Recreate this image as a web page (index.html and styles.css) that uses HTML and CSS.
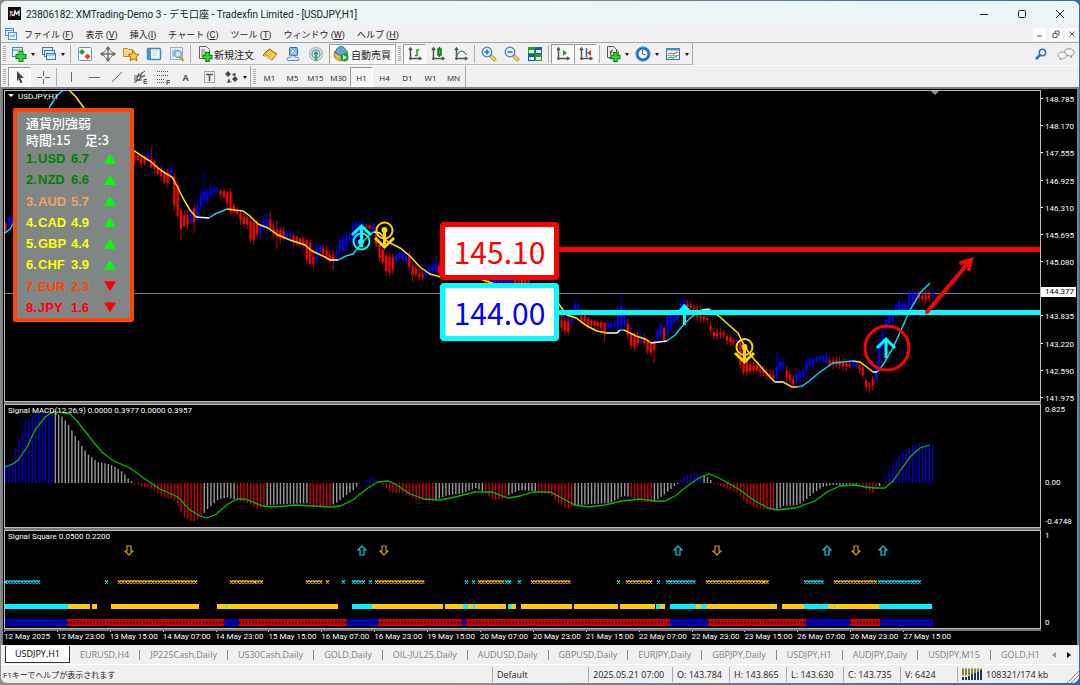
FILE: index.html
```html
<!DOCTYPE html>
<html lang="ja">
<head>
  <meta charset="UTF-8">
  <meta name="viewport" content="width=device-width, initial-scale=1.0">
  <title>XMTrading-Demo 3 - USDJPY,H1</title>
  <link rel="stylesheet" href="styles.css">
</head>
<body>
  <div class="window">
    <header class="titlebar">
      <svg class="app-logo" viewBox="0 0 13 13"><rect width="13" height="13" fill="#0b0b0b"/><path d="M2 4l3 5M5 4L2 9M6 9l1-5 1.500 3L11 4v5" stroke="#eee" stroke-width="1.300" fill="none"/><path d="M2 10l3-6" stroke="#e02020" stroke-width="1"/></svg>
      <h1>23806182: XMTrading-Demo 3 - デモ口座 - Tradexfin Limited - [USDJPY,H1]</h1>
      <div class="window-buttons">
        <button aria-label="最小化"><svg viewBox="0 0 10 10"><path d="M1 5.500h8"/></svg></button>
        <button aria-label="最大化"><svg viewBox="0 0 10 10"><rect x="1.500" y="1.500" width="7" height="7" rx="1"/></svg></button>
        <button aria-label="閉じる"><svg viewBox="0 0 10 10"><path d="M1 1l8 8M9 1L1 9"/></svg></button>
      </div>
    </header>

    <nav class="menubar">
      <svg class="menu-logo" viewBox="0 0 12 12" fill="#e8f3ff" stroke="#4b8fdc"><rect x=".5" y=".5" width="8" height="7"/><path d="M.5 2.500h8"/><rect x="3.500" y="4.500" width="8" height="7"/><path d="M5 9l1.500-2L8 9l2-3" fill="none"/></svg>
      <button>ファイル (<u>F</u>)</button>
      <button>表示 (<u>V</u>)</button>
      <button>挿入(<u>I</u>)</button>
      <button>チャート (<u>C</u>)</button>
      <button>ツール (<u>T</u>)</button>
      <button>ウィンドウ (<u>W</u>)</button>
      <button>ヘルプ (<u>H</u>)</button>
      <div class="child-buttons">
        <button aria-label="チャートを最小化"><svg viewBox="0 0 8 8"><path d="M1 6h5"/></svg></button>
        <button aria-label="元に戻す"><svg viewBox="0 0 8 8"><path d="M3 3V1h4v4H6M1 3.500h4v4H1z"/></svg></button>
        <button aria-label="チャートを閉じる"><svg viewBox="0 0 8 8"><path d="M1.500 1.500l5 5M6.500 1.500l-5 5"/></svg></button>
      </div>
    </nav>

    <div class="toolbar">
      <div class="group">
        <i class="grip"></i>
        <button class="tool drop" aria-label="新規チャート"><svg viewBox="0 0 16 16"><rect x="1.500" y="1.500" width="10" height="9" fill="#dff0fc" stroke="#4a86b4"/><path d="M2 4h9" stroke="#4a86b4"/><path d="M10 5v11M4.500 10.500h11" stroke="#087a10" stroke-width="5"/><path d="M10 6v9M5.500 10.500h9" stroke="#2fd63a" stroke-width="3"/></svg></button>
        <button class="tool drop" aria-label="チャートの組表示"><svg viewBox="0 0 16 16" fill="#d9edfb" stroke="#3f78aa"><rect x="1.500" y="1.500" width="10" height="7"/><rect x="3.500" y="4.500" width="10" height="6"/><rect x="5.500" y="7.500" width="9" height="6"/><path d="M6 9h8" stroke="#69a7d8"/></svg></button>
        <i class="sep"></i>
        <button class="tool" aria-label="気配値表示"><svg viewBox="0 0 16 16"><rect x="1.500" y="1.500" width="13" height="13" rx="1" fill="#fafdff" stroke="#6796c0"/><path d="M5 3l3 3-3 3-3-3z" fill="#21a02a"/><path d="M10.500 7.500l3 3-3 3-3-3z" fill="#e2401e"/></svg></button>
        <button class="tool" aria-label="データウィンドウ"><svg viewBox="0 0 16 16" fill="none" stroke="#707070"><circle cx="8" cy="8" r="4.500"/><path d="M8 1v14M1 8h14" stroke-width="1.500"/><path d="M6 3l2-2.500L10 3M6 13l2 2.500 2-2.500M3 6L.5 8 3 10M13 6l2.500 2L13 10" fill="#707070"/></svg></button>
        <button class="tool" aria-label="ナビゲーター"><svg viewBox="0 0 16 16"><path d="M.5 2.500h4l1 1h4v7h-9z" fill="#f8d783" stroke="#c38b25"/><path d="M10.500 4.500l1.600 3.500 3.800.4-2.800 2.600.8 3.900-3.400-2-3.400 2 .8-3.900L5 8.400 8.900 8z" fill="#ffc839" stroke="#ab6a0b"/></svg></button>
        <button class="tool" aria-label="ターミナル"><svg viewBox="0 0 16 16"><rect x="1.500" y="2.500" width="13" height="11" rx="1" fill="#eff7fe" stroke="#4683bf" stroke-width="1.500"/><path d="M2 3h3v10H2z" fill="#4c90d8"/><path d="M6.500 5h6M6.500 7h4M6.500 9h5" stroke="#bdd5e9"/></svg></button>
        <button class="tool" aria-label="ストラテジーテスター"><svg viewBox="0 0 16 16"><rect x="1.500" y="1.500" width="12" height="12" fill="#eaf4fc" stroke="#91b4ce"/><path d="M4 4v7M6 3v5" stroke="#7298b6"/><path d="M11 11l3.500 4" stroke="#d19a20" stroke-width="2.500"/><circle cx="9" cy="8" r="3.500" fill="#c6e4fa" stroke="#4c83b5"/></svg></button>
        <i class="sep"></i>
        <button class="tool wide"><svg viewBox="0 0 16 16"><path d="M2.500.5h7l3 3v9h-10z" fill="#f4f4f4" stroke="#636363"/><path d="M4 4h4M4 6h6M4 8h5M4 10h3" stroke="#777"/><path d="M10.500 6v10M5.500 11h10" stroke="#087a10" stroke-width="4.500"/><path d="M10.500 7v8M6.500 11h8" stroke="#2fd63a" stroke-width="2.500"/></svg>新規注文</button>
        <button class="tool" aria-label="MetaEditor"><svg viewBox="0 0 16 16"><path d="M1 9l6-6 8 5-5 6z" fill="#e09a1c" stroke="#9a5f08"/><path d="M2 9.500l7.500 3.500L14 8.500" fill="none" stroke="#fff0b8"/><path d="M3.500 8l3.500-4 6.500 4-3.500 4z" fill="#ffc84a"/></svg></button>
        <button class="tool" aria-label="コミュニティ"><svg viewBox="0 0 16 16"><rect x="4.500" y="1.500" width="8" height="8" rx="1" fill="#72bff6" stroke="#276bb1"/><path d="M6 3l5 5M6 7l4-4" stroke="#fff"/><path d="M2.500 14.500c-2-3 2-4 3-3 1-3 5-2 5 0 3-1 4 1 3 3z" fill="#dce9fa" stroke="#6589b4"/></svg></button>
        <button class="tool" aria-label="シグナル"><svg viewBox="0 0 16 16" fill="none"><circle cx="8" cy="8" r="6.500" stroke="#acc0ca" stroke-width="1.500"/><circle cx="8" cy="8" r="4" stroke="#6997aa" stroke-width="1.500"/><circle cx="8" cy="7.500" r="2" fill="#397db4"/><path d="M8 8v7" stroke="#38b53b" stroke-width="2.500"/></svg></button>
        <button class="tool auto" aria-pressed="true"><svg viewBox="0 0 16 16"><path d="M1 8l7-4 7 4-2 4-6 3-5-3z" fill="#efbd3d" stroke="#a77b1c"/><path d="M3 5c1-6 9-6 10 0l2 1-7 4-7-4z" fill="#63a6d2" stroke="#34759f"/><circle cx="11.500" cy="11.500" r="4" fill="#19a425"/><path d="M10 9v5l4-2.500z" fill="#fff"/></svg>自動売買</button>
      </div>
      <div class="group">
        <i class="grip"></i>
        <button class="tool" aria-label="バーチャート" aria-pressed="true"><svg viewBox="0 0 16 16" fill="none" stroke="#555" stroke-width="1.500"><path d="M3.500 2v12M2 12.500h12M2 4l1.500-2L5 4M12 11l2 1.500-2 1.500"/><path d="M8 9.500h2V4h2" stroke="#159b20"/></svg></button>
        <button class="tool" aria-label="ローソク足"><svg viewBox="0 0 16 16" fill="none" stroke="#555" stroke-width="1.500"><path d="M3.500 2v12M2 12.500h12M2 4l1.500-2L5 4M12 11l2 1.500-2 1.500"/><path d="M9.500 1v10" stroke="#117518"/><path d="M8 3h3v6H8z" fill="#27c433" stroke="#117518"/></svg></button>
        <button class="tool" aria-label="ラインチャート"><svg viewBox="0 0 16 16" fill="none" stroke="#555" stroke-width="1.500"><path d="M3.500 2v12M2 12.500h12M2 4l1.500-2L5 4M12 11l2 1.500-2 1.500"/><path d="M3.500 11c3-7 6-8 10-2" stroke="#4b9852" stroke-width="1.200"/></svg></button>
        <i class="sep"></i>
        <button class="tool" aria-label="拡大"><svg viewBox="0 0 16 16"><path d="M9.500 9.500l5 5" stroke="#b98913" stroke-width="3.500"/><path d="M10 10l4 4" stroke="#ffd861" stroke-width="2"/><circle cx="6" cy="6" r="4.800" fill="#e0f2ff" stroke="#3d82c7" stroke-width="1.300"/><path d="M3.500 6h5M6 3.500v5" stroke="#256eb8" stroke-width="1.500"/></svg></button>
        <button class="tool" aria-label="縮小"><svg viewBox="0 0 16 16"><path d="M9.500 9.500l5 5" stroke="#b98913" stroke-width="3.500"/><path d="M10 10l4 4" stroke="#ffd861" stroke-width="2"/><circle cx="6" cy="6" r="4.800" fill="#e0f2ff" stroke="#3d82c7" stroke-width="1.300"/><path d="M3.500 6h5" stroke="#256eb8" stroke-width="1.500"/></svg></button>
        <button class="tool" aria-label="整列"><svg viewBox="0 0 16 16"><path d="M1 1h7v7H1zM8 8h7v7H8z" fill="#2e9c2a"/><path d="M8 1h7v7H8zM1 8h7v7H1z" fill="#2456a8"/><path d="M2 4h5v3H2zM9 4h5v3H9zM2 11h5v3H2zM9 11h5v3H9z" fill="#d9efe0"/></svg></button>
        <i class="sep"></i>
        <button class="tool" aria-label="自動スクロール" aria-pressed="true"><svg viewBox="0 0 16 16" fill="none" stroke="#555" stroke-width="1.500"><path d="M3.500 2v12M2 12.500h12M2 4l1.500-2L5 4M12 11l2 1.500-2 1.500"/><path d="M8 4v6l4-3z" fill="#17a524" stroke="none"/></svg></button>
        <button class="tool" aria-label="チャートシフト" aria-pressed="true"><svg viewBox="0 0 16 16" fill="none" stroke="#555" stroke-width="1.500"><path d="M3.500 2v12M2 12.500h12M2 4l1.500-2L5 4M12 11l2 1.500-2 1.500"/><path d="M8.500 2v9" stroke="#2870b8"/><path d="M13 4v6L9 7z" fill="#d64220" stroke="none"/></svg></button>
        <i class="sep"></i>
        <button class="tool drop" aria-label="インディケータ"><svg viewBox="0 0 16 16"><path d="M4.500 2.500h6l3 3v7h-9z" fill="#f7f7f7" stroke="#777"/><path d="M2.500.5h6l3 3v8h-9z" fill="#eee" stroke="#555"/><path d="M5 9c1-1 0-5 3-5M4.500 6h3" stroke="#444" fill="none"/><path d="M10.500 6v10M5.500 11h10" stroke="#087a10" stroke-width="4.500"/><path d="M10.500 7v8M6.500 11h8" stroke="#2fd63a" stroke-width="2.500"/></svg></button>
        <button class="tool drop" aria-label="時間枠"><svg viewBox="0 0 16 16"><circle cx="8" cy="8" r="6" fill="#eef8ff" stroke="#2468b4" stroke-width="3"/><circle cx="8" cy="8" r="7" fill="none" stroke="#5ba1e8"/><path d="M7.500 4v4l3 1" stroke="#555" fill="none"/></svg></button>
        <button class="tool drop" aria-label="定型チャート"><svg viewBox="0 0 16 16"><rect x="1.500" y="2.500" width="13" height="11" fill="#f1f8fd" stroke="#3f719e"/><path d="M1 3.500h14" stroke="#5693ca" stroke-width="2"/><path d="M3 8l3-1 2 1 5-2" stroke="#b9562f" fill="none"/><path d="M2 9.500h12" stroke="#8aaeca"/><path d="M3 12l3-1 2 1 4-2" stroke="#279b39" fill="none"/></svg></button>
      </div>
      <div class="toolbar-right">
        <button aria-label="検索"><svg viewBox="0 0 12 12"><path d="M1 11l4-4" stroke="#276fc8" stroke-width="2.500"/><circle cx="7.500" cy="4.500" r="3.200" fill="#f2f8ff" stroke="#276fc8" stroke-width="1.500"/></svg></button>
        <button class="chat" aria-label="チャット"><svg viewBox="0 0 18 12" fill="#f7f7f7" stroke="#949494"><path d="M12 .7c6 0 7 6 2 7l1 2-3-2c-6 0-6-7 0-7z"/><path d="M5.500 4c5 0 6 6 1 6.200L3 12l.4-2C-.8 8.500.8 4 5.500 4z"/></svg></button>
      </div>
    </div>

    <div class="toolbar second">
      <div class="group">
        <i class="grip"></i>
        <button class="tool" aria-label="カーソル" aria-pressed="true"><svg viewBox="0 0 16 16"><path d="M5 2l7 7H8.500l2 4.500-2 .8L6.800 10 5 12z" fill="#444"/></svg></button>
        <button class="tool" aria-label="十字カーソル"><svg viewBox="0 0 16 16" stroke="#666"><path d="M8.500 2v5M8.500 10v5M2 8.500h5M10 8.500h5"/></svg></button>
        <i class="sep"></i>
        <button class="tool" aria-label="垂直線"><svg viewBox="0 0 16 16" stroke="#666"><path d="M8.500 3v10"/></svg></button>
        <button class="tool" aria-label="水平線"><svg viewBox="0 0 16 16" stroke="#666"><path d="M3 8.500h11"/></svg></button>
        <button class="tool" aria-label="トレンドライン"><svg viewBox="0 0 16 16" stroke="#666"><path d="M3 13L13 3"/></svg></button>
        <button class="tool" aria-label="チャネル"><svg viewBox="0 0 16 16" stroke="#555" fill="none"><path d="M2 10l11-8M2 14l11-8M4 13l3-9M7 12l3-9M2 7h11M2 11h8M15 10.500h-3v4h3M12 12.500h3"/></svg></button>
        <button class="tool" aria-label="フィボナッチ"><svg viewBox="0 0 16 16" stroke="#555" fill="none"><path d="M2 2.500h12M2 6.500h12M2 10.500h8M2 13.500h7" stroke-dasharray="1 1"/><path d="M15 11.500h-3V16M12 13.500h3"/></svg></button>
        <button class="tool letter" aria-label="テキスト">A</button>
        <button class="tool" aria-label="テキストラベル"><svg viewBox="0 0 16 16" stroke="#555" fill="none"><rect x="3.500" y="2.500" width="10" height="11" stroke-dasharray="1 1"/><path d="M5 5.500h7M8.500 5v7" stroke-width="1.500"/></svg></button>
        <button class="tool drop" aria-label="矢印"><svg viewBox="0 0 16 16" fill="#444"><path d="M5 2l3 3-3 3-3-3zM12 7l3 3-3 3-3-3z"/><path d="M6 9l1 3 2 1-5 1zM9 6l2-2 2 1-1 2z"/></svg></button>
      </div>
      <div class="group periods">
        <i class="grip"></i>
        <button class="tool">M1</button>
        <button class="tool">M5</button>
        <button class="tool">M15</button>
        <button class="tool">M30</button>
        <button class="tool" aria-pressed="true">H1</button>
        <button class="tool">H4</button>
        <button class="tool">D1</button>
        <button class="tool">W1</button>
        <button class="tool">MN</button>
      </div>
    </div>

    <main class="chart-window">
      <section class="plot price-plot">
        <svg id="price" viewBox="5 91 1035 310" preserveAspectRatio="none">
          <path d="M5 293.500H1040" stroke="#737b8c"/>
          <path d="M931 91h8l-4 4z" fill="#8295a9"/>
          <g id="candles"></g>
          <g id="average"></g>
          <path d="M558 249.500H1040" stroke="#f00" stroke-width="5"/>
          <path d="M558 312.500H1040" stroke="#0ff" stroke-width="5"/>
          <g fill="none" stroke="#0ff" stroke-width="3">
            <circle cx="361.500" cy="241.500" r="8" stroke-width="2"/>
            <path d="M361.500 247V227M352 235l9.500-9 9.500 9"/><circle cx="361" cy="242" r="1.500"/>
            <path d="M684.500 325V307M677 314l7.500-8 7.500 8" stroke-width="3"/>
            <path d="M886 358V339M877 348l9-9 9 9" stroke-width="3"/>
          </g>
          <g fill="none" stroke="#ffd800" stroke-width="3">
            <circle cx="384.500" cy="230.500" r="8" stroke-width="2"/>
            <path d="M384.500 230V246M375 238l9.500 9 9.500-9"/><circle cx="384.500" cy="230" r="1.500"/>
            <circle cx="744.500" cy="347" r="8" stroke-width="2"/>
            <path d="M744.500 346V361M735 353l9.500 9 9.500-9"/><circle cx="744.500" cy="347" r="1.500"/>
          </g>
          <circle cx="887" cy="348" r="22" fill="none" stroke="#f00" stroke-width="3"/>
          <path d="M927 312L970 261M961 263l10-3-2 9" fill="none" stroke="#f00" stroke-width="4" stroke-linecap="round"/>
        </svg>
        <p class="plot-title"><span class="triangle"></span>USDJPY,H1</p>
        <aside class="strength">
          <h2>通貨別強弱</h2>
          <p>時間:15<span>足:3</span></p>
          <ol>
            <li class="green"><span>1.</span><span>USD</span><span>6.7</span><i class="up"></i></li>
            <li class="green"><span>2.</span><span>NZD</span><span>6.6</span><i class="up"></i></li>
            <li class="sand"><span>3.</span><span>AUD</span><span>5.7</span><i class="up"></i></li>
            <li class="yellow"><span>4.</span><span>CAD</span><span>4.9</span><i class="up"></i></li>
            <li class="yellow"><span>5.</span><span>GBP</span><span>4.4</span><i class="up"></i></li>
            <li class="yellow"><span>6.</span><span>CHF</span><span>3.9</span><i class="up"></i></li>
            <li class="orange"><span>7.</span><span>EUR</span><span>2.3</span><i class="down"></i></li>
            <li class="red"><span>8.</span><span>JPY</span><span>1.6</span><i class="down"></i></li>
          </ol>
        </aside>
        <div class="levels">
          <div class="level target">145.10</div>
          <div class="level support">144.00</div>
        </div>
      </section>
      <div class="scale price-scale">
        <span>148.785</span><span>148.170</span><span>147.555</span><span>146.925</span>
        <span>146.310</span><span>145.695</span><span>145.080</span><span>144.450</span>
        <span>143.835</span><span>143.220</span><span>142.590</span><span>141.975</span>
        <b class="current">144.377</b>
      </div>

      <section class="plot">
        <svg viewBox="5 405 1035 122" preserveAspectRatio="none">
          <g id="histogram"></g>
          <path id="signal" fill="none" stroke="#0b0" stroke-width="1.300"/>
        </svg>
        <p class="plot-title">Signal MACD(12,26,9) 0.0000 0.3977 0.0000 0.3957</p>
      </section>
      <div class="scale macd-scale"><span>0.825</span><span>0.00</span><span>-0.4748</span></div>

      <section class="plot">
        <svg id="square" viewBox="5 531 1035 97" preserveAspectRatio="none"></svg>
        <p class="plot-title">Signal Square 0.0500 0.2200</p>
      </section>
      <div class="scale square-scale"><span>1</span><span>0</span></div>

      <div class="time-axis">
        <span>12 May 2025</span><span>12 May 23:00</span><span>13 May 15:00</span><span>14 May 07:00</span><span>14 May 23:00</span><span>15 May 15:00</span>
        <span>16 May 07:00</span><span>16 May 23:00</span><span>19 May 15:00</span><span>20 May 07:00</span><span>20 May 23:00</span><span>21 May 15:00</span>
        <span>22 May 07:00</span><span>22 May 23:00</span><span>23 May 15:00</span><span>26 May 07:00</span><span>26 May 23:00</span><span>27 May 15:00</span>
      </div>
    </main>

    <nav class="tabs">
      <button class="active">USDJPY,H1</button>
      <button>EURUSD,H4</button>
      <button>JP225Cash,Daily</button>
      <button>US30Cash,Daily</button>
      <button>GOLD,Daily</button>
      <button>OIL-JUL25,Daily</button>
      <button>AUDUSD,Daily</button>
      <button>GBPUSD,Daily</button>
      <button>EURJPY,Daily</button>
      <button>GBPJPY,Daily</button>
      <button>USDJPY,H1</button>
      <button>AUDJPY,Daily</button>
      <button>USDJPY,M15</button>
      <button>GOLD,H1</button>
      <div class="tab-arrows">
        <button aria-label="前へ"><svg viewBox="0 0 6 8"><path d="M5 1v6L1 4z" fill="#999"/></svg></button>
        <button aria-label="次へ"><svg viewBox="0 0 6 8"><path d="M1 1v6l4-3z" fill="#000"/></svg></button>
      </div>
    </nav>

    <footer class="statusbar">
      <span class="help">F1キーでヘルプが表示されます</span>
      <span class="profile">Default</span>
      <span class="date">2025.05.21 07:00</span>
      <span>O: 143.784</span>
      <span>H: 143.865</span>
      <span>L: 143.630</span>
      <span>C: 143.735</span>
      <span>V: 6424</span>
      <span class="traffic">
        <svg viewBox="0 0 20 12"><path d="M0 4h20" stroke="#85852a" stroke-width="7" stroke-dasharray="2 1"/><path d="M1 12V9M4 12V9M7 12V8M10 12V6M13 12V5M16 12V4M19 12V2" stroke="#16395f" stroke-width="2"/></svg>
        108321/174 kb
      </span>
      <svg class="resize" viewBox="0 0 12 12"><path d="M0 12L12 0M4 12l8-8M8 12l4-4" stroke="#888"/></svg>
    </footer>
  </div>
  <script src="chart.js"></script>
</body>
</html>
```
FILE: styles.css
```css
* {
  box-sizing: border-box;
}

body {
  margin: 0;
  background: linear-gradient(90deg, #8c8c8c 40%, #2d6ca8);
  font-family: "Open Sans", "Noto Sans CJK JP", sans-serif;
  font-size: 9px;
  color: #222;
}

h1, h2, p, ol {
  margin: 0;
  padding: 0;
  font-weight: normal;
}

button {
  margin: 0;
  padding: 0;
  border: none;
  background: none;
  font: inherit;
  color: inherit;
  white-space: nowrap;
}

svg {
  display: block;
}

.window {
  display: flex;
  flex-direction: column;
  height: calc(100vh - 3px);
  margin: 1px 1px 0;
  background: #f0f0f0;
  border-radius: 6px;
  overflow: hidden;
}

.titlebar {
  display: flex;
  align-items: center;
  flex: 0 0 25px;
  padding-left: 7px;
  background: #ebf5f6;
}

.app-logo {
  width: 13px;
  height: 13px;
}

.titlebar h1 {
  flex: 1;
  margin-left: 5px;
  font-family: Roboto, "Noto Sans CJK JP", sans-serif;
  font-size: 10px;
  white-space: nowrap;
}

.window-buttons {
  display: flex;
}

.window-buttons button {
  width: 38px;
  height: 24px;
  display: grid;
  place-items: center;
}

.window-buttons svg {
  width: 10px;
  height: 10px;
  fill: none;
  stroke: #222;
}

.menubar {
  display: flex;
  align-items: center;
  gap: 12px;
  flex: 0 0 17px;
  padding-left: 4px;
  border-bottom: 1px solid #a5a5a5;
  font-family: Roboto, "Noto Sans CJK JP", sans-serif;
  font-size: 9px;
}

.menu-logo {
  width: 12px;
  height: 12px;
  margin-right: -5px;
}

.child-buttons {
  display: flex;
  gap: 3px;
  margin-left: auto;
  padding-right: 1px;
}

.child-buttons button {
  display: grid;
  place-items: center;
  width: 13px;
  height: 13px;
  background: #fff;
}

.child-buttons svg {
  width: 8px;
  height: 8px;
  fill: none;
  stroke: #4d6275;
}

/* toolbars */
.toolbar {
  display: flex;
  flex: 0 0 23px;
  border-bottom: 1px solid #fafafa;
}

.toolbar.second {
  flex-basis: 21px;
  border-bottom: none;
}

.group {
  display: flex;
  align-items: stretch;
  padding: 1px 0 0 2px;
  border-right: 1px solid #a8a8a8;
  border-bottom: 1px solid #b9b9b9;
}

.second .group {
  border-bottom: none;
}

.grip {
  width: 3px;
  margin: 2px 2px 2px 0;
  background: repeating-linear-gradient(#aaa 0 1px, #f0f0f0 1px 2px);
}

.sep {
  width: 1px;
  margin: 1px 2px;
  background: #b0b0b0;
}

.tool {
  display: flex;
  align-items: center;
  justify-content: center;
  width: 23px;
  border: 1px solid transparent;
}

.tool svg {
  flex: none;
  width: 16px;
  height: 16px;
}

.tool[aria-pressed="true"] {
  background: #f8f8f8;
  border-color: #999 #fff #fff #999;
}

.tool.drop {
  gap: 4px;
  width: 30px;
}

.tool.drop::after {
  content: "";
  border: 2px solid transparent;
  border-top: 3px solid #111;
  border-bottom: 0;
}

.tool.wide {
  gap: 1px;
  width: 65px;
  font-size: 10px;
}

.tool.auto {
  gap: 2px;
  width: 66px;
  margin-left: 2px;
  font-size: 10px;
}

.tool.letter {
  font-weight: bold;
  font-size: 9px;
  color: #555;
}

.periods .tool {
  font-size: 8px;
}

.toolbar-right {
  display: flex;
  align-items: center;
  gap: 10px;
  margin-left: auto;
  padding-right: 4px;
}

.toolbar-right svg {
  width: 12px;
  height: 12px;
}

.toolbar-right .chat svg {
  width: 18px;
}

/* chart area */
.chart-window {
  flex: 1;
  min-height: 0;
  display: grid;
  grid-template-columns: minmax(0, 1fr) 36px;
  grid-template-rows: minmax(0, 312fr) minmax(0, 124fr) minmax(0, 99fr) 14px;
  row-gap: 2px;
  padding-top: 1px;
  background: #000;
  border: solid #808080;
  border-width: 2px 2px 0;
  color: #fff;
  font-family: Roboto, "Noto Sans CJK JP", sans-serif;
  font-size: 8px;
  line-height: 12px;
}

.plot {
  position: relative;
  margin-left: 1px;
  border: 1px solid #bbb;
  box-shadow: 0 2px #777;
}

.plot svg {
  position: absolute;
  inset: 0;
  width: 100%;
  height: 100%;
}

.plot-title {
  position: relative;
  padding-left: 3px;
}

.triangle {
  display: inline-block;
  margin: 0 4px 2px 0;
  border: 3px solid transparent;
  border-top-color: #fff;
  border-bottom: 0;
}

.scale {
  display: flex;
  flex-direction: column;
  justify-content: space-between;
}

.scale span {
  padding-left: 4px;
}

.price-scale {
  position: relative;
  margin: 4px 0 -3px;
}

.price-scale span::before {
  content: "";
  display: inline-block;
  width: 2px;
  height: 1px;
  margin: 0 2px 3px -4px;
  background: #fff;
}

.current {
  position: absolute;
  top: 62%;
  left: 0;
  right: 1px;
  padding-left: 4px;
  height: 10px;
  line-height: 10px;
  background: #fff;
  color: #000;
  font-weight: normal;
}

.macd-scale span:nth-child(2) {
  margin-top: 34px;
}

.time-axis {
  grid-column: 1 / 3;
  display: grid;
  grid-template-columns: repeat(18, 4.93%);
  margin: -2px 0 0 1px;
  white-space: nowrap;
}

.time-axis span {
  line-height: 10px;
}

.time-axis span::before {
  content: "";
  display: block;
  width: 1px;
  height: 3px;
  background: #ccc;
}

/* currency strength panel, lies over the chart */
.strength {
  position: absolute;
  top: 17px;
  left: 8px;
  width: 121px;
  height: 214px;
  padding: 3px 8px 0 9px;
  border: 4px solid #ff4500;
  border-radius: 2px;
  background: #808686;
  font: bold 13px "Liberation Sans", "Noto Sans CJK JP", sans-serif;
}

.strength h2,
.strength p {
  font-size: 13px;
  font-weight: 500;
  line-height: 17px;
}

.strength p {
  font-family: "Noto Sans CJK JP", sans-serif;
  line-height: 16px;
}

.strength p span {
  margin-left: 14px;
}

.strength ol {
  display: grid;
  grid-auto-rows: 1fr;
  height: 170px;
  font-weight: bold;
  list-style: none;
}

.strength li {
  display: grid;
  grid-template-columns: 12px 33px 33px 1fr;
  align-items: center;
}

.up,
.down {
  width: 12px;
  height: 10px;
  background: #0f0;
  clip-path: polygon(50% 0, 100% 100%, 0 100%);
}

.down {
  background: #f00;
  clip-path: polygon(0 0, 100% 0, 50% 100%);
}

.green { color: #008000; }
.sand { color: #f4a460; }
.yellow { color: #ff0; }
.orange { color: #ff4500; }
.red { color: #f00; }

/* price level labels */
.levels {
  position: absolute;
  top: 131px;
  left: 435px;
  display: grid;
  gap: 3px;
}

.level {
  width: 119px;
  height: 58px;
  border: 5px solid #f00;
  border-radius: 4px;
  background: #fff;
  color: #f00;
  font: 30px/48px "Noto Sans CJK JP", sans-serif;
  text-align: center;
}

.level.support {
  border-color: #0ff;
  color: #00f;
}

/* chart tabs */
.tabs {
  display: flex;
  flex: 0 0 19px;
  padding: 1px 0 1px 4px;
  color: #808080;
}

.tabs > button {
  padding: 0 11px 0 10px;
  line-height: 12px;
  background: linear-gradient(#888, #888) right center / 1px 10px no-repeat;
}

.tabs > button:nth-last-child(2) {
  background: none;
}

.tabs > .active {
  padding: 0 9px;
  background: #fff;
  border: 1px solid #333;
  border-top: none;
  color: #000;
}

.tab-arrows {
  display: flex;
  gap: 9px;
  margin: 0 8px 0 auto;
}

.tab-arrows svg {
  width: 6px;
  height: 8px;
}

.statusbar {
  display: flex;
  align-items: center;
  flex: 0 0 19px;
  padding-left: 2px;
  border-top: 1px solid #fff;
  white-space: nowrap;
}

.statusbar span {
  flex: 0 0 57px;
  padding-left: 4px;
  border-left: 1px solid #aaa;
  line-height: 15px;
}

.statusbar .help {
  flex: 1;
  padding: 0;
  border: none;
  font-size: 8px;
}

.statusbar .profile {
  flex-basis: 96px;
}

.statusbar .date {
  flex-basis: 84px;
}

.statusbar .traffic {
  display: flex;
  align-items: center;
  gap: 4px;
  flex-basis: 110px;
}

.traffic svg {
  width: 20px;
  height: 12px;
}

.resize {
  width: 12px;
  height: 12px;
  align-self: flex-end;
}
```
FILE: chart.js
```js
const STEP = 3.31;

function shape(parent, name, attrs) {
  const el = document.createElementNS('http://www.w3.org/2000/svg', name);
  for (const key in attrs) el.setAttribute(key, attrs[key]);
  document.getElementById(parent).appendChild(el);
}

function parse(text) {
  return text.trim().split(/\s+/).map(p => p.split(',').map(v => isNaN(v) ? v : Number(v)));
}

// x, body top, body bottom, r = falling / b = rising
const candles = parse(`
  5,224,232,r 8,217,226,b 12,215,224,b 15,213,222,b
  134,155,160,r 143,159,164,r 148,154,161,b 153,160,169,r 160,168,175,r 167,173,183,r 171,170,177,b
  176,179,212,r 180,210,228,r 187,215,225,r 191,213,222,b 194,208,221,r 197,207,221,b 200,196,206,b
  204,192,202,b 208,192,200,b 213,187,192,b 218,189,191,b 222,191,196,r 228,193,203,r 231,192,212,r
  235,209,213,r 240,213,220,r 247,217,224,r 252,222,243,r 256,225,234,r 259,226,234,b 265,219,227,b
  269,218,228,r 277,229,236,r 283,231,239,r 289,234,239,b 293,236,242,r 303,238,245,r 309,240,263,r
  313,258,264,r 316,249,262,b 321,247,253,b 325,249,254,r 332,255,262,r 336,252,256,b 340,240,251,b
  347,237,246,b 350,235,241,b 356,223,240,b 362,222,228,b 368,226,228,r 372,224,228,b 375,224,240,r
  378,245,257,r 383,250,263,r 388,256,273,r 392,257,270,r 395,255,263,b 402,253,258,b 406,254,260,b
  409,256,266,r 412,266,275,r 422,274,277,r 427,268,274,b 435,265,271,b 438,266,272,r 444,270,276,r
  484,275,283,r 500,277,284,b 528,277,284,r
  559,316,322,r 563,320,330,r 567,322,333,r 570,316,324,b 574,305,315,b 577,304,310,b 580,312,320,r
  593,320,326,r 600,322,326,r 605,324,334,r 609,324,328,b 615,324,326,b 620,305,327,b 623,307,322,b
  626,322,334,r 632,334,346,r 635,338,346,r 639,337,343,r 642,337,341,b 645,338,344,r 650,343,352,r
  653,342,352,r 656,332,342,b 660,324,335,b 665,329,340,r 668,316,332,b 675,314,322,b 680,303,312,b
  685,300,305,b 689,305,308,r 698,310,317,r 707,317,320,r 710,325,330,r 715,333,336,r 722,333,335,r
  728,337,341,r 735,340,342,r 738,338,342,b 742,340,372,r 747,362,371,r 753,365,371,r 762,369,372,r
  768,373,376,r 775,375,379,r 778,364,377,b 782,362,366,b 785,363,373,r 788,373,380,r 793,379,384,r
  798,372,380,b 803,370,377,b 807,362,370,b 812,359,363,b 820,357,360,b 825,355,361,b 828,360,364,r
  835,361,365,r 848,364,366,r 855,361,366,b 858,365,368,r 862,367,372,r 864,370,386,r 868,385,388,r
  872,380,386,r 875,378,382,b 877,360,378,b 881,335,360,b 884,330,345,b 887,317,326,b 891,315,323,b
  895,307,312,b 898,303,311,b 905,305,311,b 910,292,306,b 915,293,297,b 922,296,299,r 927,296,299,r 931,293,297,b`);

// candles with a long shadow: x, high, low
const shadows = parse(`150,148,166 180,208,240 194,205,233 204,173,210 230,188,214 269,211,232 277,220,249
  313,250,269 332,250,270 362,218,232 412,262,282 435,256,275 574,301,318 604,322,342 620,292,328 653,342,363
  684,296,308 778,351,380 825,352,362 868,382,393 910,290,308`);

function at(points, x, col) {
  let i = points.findIndex(p => p[0] >= x);
  if (i < 0) return points[points.length - 1][col];
  if (i === 0) return points[0][col];
  const a = points[i - 1], b = points[i];
  return a[col] + (b[col] - a[col]) * (x - a[0]) / (b[0] - a[0]);
}

for (let n = 0; n < 281; n++) {
  const x = 5.5 + n * STEP;
  if ((x > 16 && x < 133) || (x > 440 && x < 483) || (x > 529 && x < 558)) continue;
  const near = candles.reduce((a, b) => Math.abs(b[0] - x) < Math.abs(a[0] - x) ? b : a);
  const top = (at(candles, x, 1) + near[1]) / 2 + Math.sin(n * 7) * 0.8;
  const bottom = Math.max(top + 2, (at(candles, x, 2) + near[2]) / 2 + Math.sin(n * 5) * 0.8);
  const fill = near[3] === 'r' ? '#f00' : '#00f';
  const long = shadows.find(s => Math.abs(s[0] - x) < STEP / 2);
  const high = long ? long[1] : top - 1 - Math.abs(Math.sin(n * 3)) * 4;
  const low = long ? long[2] : bottom + 1 + Math.abs(Math.sin(n * 11)) * 4;
  shape('candles', 'rect', { x: x - 0.5, y: high, width: 1, height: low - high, fill: fill, opacity: 0.8 });
  shape('candles', 'rect', { x: x - 1.1, y: top, width: 2.2, height: bottom - top, fill: fill });
}

const average = [
  ['#1cf', '5,233 10,229 14,222'],
  ['#1cf', '49,108 55,98 62,91 66,89'],
  ['#ffe600', '69,90 76,97 84,108'],
  ['#ffe600', '133,150 142,156 150,161 158,168 165,173 172,177 177,186 184,200 190,210 196,217'],
  ['#fff', '196,217 209,218'],
  ['#1cf', '209,218 215,214 227,209'],
  ['#ffe600', '227,209 243,211 250,216 258,224 268,228 278,235 290,240 305,245 312,251 325,257 330,260'],
  ['#fff', '330,260 338,260'],
  ['#1cf', '338,260 346,256 353,254 361,244 370,234 374,232'],
  ['#fff', '374,232 380,233'],
  ['#ffe600', '380,233 388,242 400,248 410,256 420,267 430,274 441,277 480,279 495,284'],
  ['#ffe600', '558,303 567,315 576,318 587,326 597,331 607,333'],
  ['#fff', '607,333 617,333 620,330'],
  ['#1cf', '620,330 624,330'],
  ['#ffe600', '624,330 636,336 645,339 651,343'],
  ['#fff', '651,343 659,342 667,341'],
  ['#1cf', '667,341 675,335 685,323 695,314 702,310'],
  ['#fff', '702,310 709,309'],
  ['#ffe600', '709,309 720,317 730,326 738,333 745,347 753,358 762,368 770,377 775,382'],
  ['#fff', '775,382 783,382'],
  ['#ffe600', '783,382 792,387 797,387'],
  ['#1cf', '797,387 802,386 808,382 820,372 833,363 853,361'],
  ['#ffe600', '853,361 860,362 868,368 873,372'],
  ['#fff', '873,372 877,372'],
  ['#1cf', '877,372 883,365 893,348 910,310 920,293 930,283']
];
average.forEach(([color, points]) => shape('average', 'polyline', { points: points, fill: 'none', stroke: color, 'stroke-width': 1.5 }));

// MACD
const ZERO = 483;
const macd = parse(`5,464 13,461 15,448 22,429 25,420 32,415 37,413 55,413 62,417 68,425 75,437 82,447 88,455 97,462
  108,464 115,467 122,472 128,479 133,483 142,487 150,488 163,497 173,499 178,507 183,517 193,522 200,517 207,509
  217,500 227,497 235,500 247,503 257,509 267,505 307,503 313,507 330,506 337,502 347,494 353,490 358,484 361,482 372,477
  380,483 385,487 390,493 403,493 417,500 432,501 447,495 460,494 475,488 483,492 493,500 503,499 510,494 520,490
  532,491 550,495 557,502 567,509 577,505 610,503 622,496 630,497 635,501 652,503 663,495 675,485 678,483 683,477
  692,473 703,475 708,478 713,483 730,490 738,493 745,503 758,508 775,511 782,506 797,505 805,500 813,493 822,487
  830,485 858,484 865,489 872,493 882,483 888,472 897,456 910,446 918,443 931,445`);
const colors = parse(`53,blue 133,gray 201,red 234,gray 264,red 307,gray 330,red 358,gray 379,blue 432,red 482,gray
  505,red 535,gray 574,red 630,gray 653,red 677,gray 703,blue 713,gray 776,red 857,gray 878,red 881,gray 940,blue`);
const fills = { blue: '#0000d0', gray: '#999', red: '#d00000' };

for (let n = 0; n < 281; n++) {
  const x = 5 + n * STEP;
  const y = at(macd, x, 1);
  shape('histogram', 'rect', {
    x: x, y: Math.min(y, ZERO), width: 1.4, height: Math.max(1, Math.abs(y - ZERO)),
    fill: fills[colors.find(c => x < c[0])[1]]
  });
}

const signal = parse(`5,467 13,464 18,460 27,447 35,430 45,417 53,412 60,412 70,414 77,421 85,431 95,444 102,452
  112,460 130,468 145,479 160,489 178,497 190,510 200,516 207,518 215,515 228,504 237,499 245,499 263,506 275,507
  295,505 330,507 340,506 353,500 360,494 368,488 378,482 388,481 395,484 410,494 425,499 440,500 455,497 475,492
  492,492 508,498 520,496 533,492 550,492 560,497 575,505 588,507 605,505 622,501 640,499 655,501 665,501 675,496
  685,488 697,479 703,476 709,474 717,477 730,484 740,490 755,501 768,508 777,510 795,508 815,501 827,492 840,486
  855,485 865,487 875,488 885,488 893,481 900,471 910,457 920,448 930,445`);
document.getElementById('signal').setAttribute('d', 'M' + signal.map(p => p.join(' ')).join('L'));

// Signal Square rows
const cyan = '#00f0ff', gold = '#ffc800';
const arrows = [[129, 0], [362, 1], [384, 0], [678, 1], [717, 0], [827, 1], [856, 0], [883, 1]];
arrows.forEach(([x, up]) => shape('square', 'path', {
  d: up ? `M${x} 546l-4 4h2v5h4v-5h2z` : `M${x} 555l-4-4h2v-5h4v5h2z`,
  fill: 'none', stroke: up ? '#00d0e0' : '#d09a10', 'stroke-width': 1.2
}));

parse(`5,41,c 106,107,c 119,197,y 231,263,y 307,323,y 327,328,y 343,344,c 353,366,c 370,371,c 376,425,y 466,467,c
  473,474,c 479,505,y 506,510,c 519,520,c 532,570,y 618,619,c 627,653,y 658,659,c 667,696,c 707,768,y 805,824,c
  835,877,y 879,919,c`).forEach(([from, to, c]) => {
  for (let x = from; x <= to; x += STEP) {
    shape('square', 'path', { d: `M${x - 1} 580.500l3 3m0-3l-3 3`, stroke: c === 'c' ? cyan : gold, 'stroke-width': 1.3, fill: 'none' });
  }
});

parse(`5,68,c 68,90,y 92,97,y 111,199,y 217,338,y 226,227,c 352,372,c 372,443,y 445,463,y 463,468,c 468,473,y 473,475,c
  475,506,y 508,511,c 511,516,y 521,572,y 574,618,y 620,655,y 656,660,c 660,665,y 670,696,c 696,701,y 701,706,c
  706,777,y 782,804,y 804,828,c 828,879,y 834,835,c 879,932,c`).forEach(([from, to, c]) => {
  shape('square', 'rect', { x: from, y: 604, width: to - from, height: 5, fill: c === 'c' ? cyan : gold });
});

parse(`5,67,b 67,224,r 224,239,b 239,347,r 347,378,b 378,462,r 462,466,b 466,670,r 670,708,b 708,806,r 806,850,b
  850,880,r 880,933,b`).forEach(([from, to, c]) => {
  shape('square', 'rect', { x: from, y: 619, width: to - from, height: 7, fill: c === 'b' ? '#0000c8' : '#d00000' });
  shape('square', 'path', { d: `M${from} 622.500H${to}`, stroke: '#100020', 'stroke-width': 2, 'stroke-dasharray': '1.6 1.71' });
});
```
